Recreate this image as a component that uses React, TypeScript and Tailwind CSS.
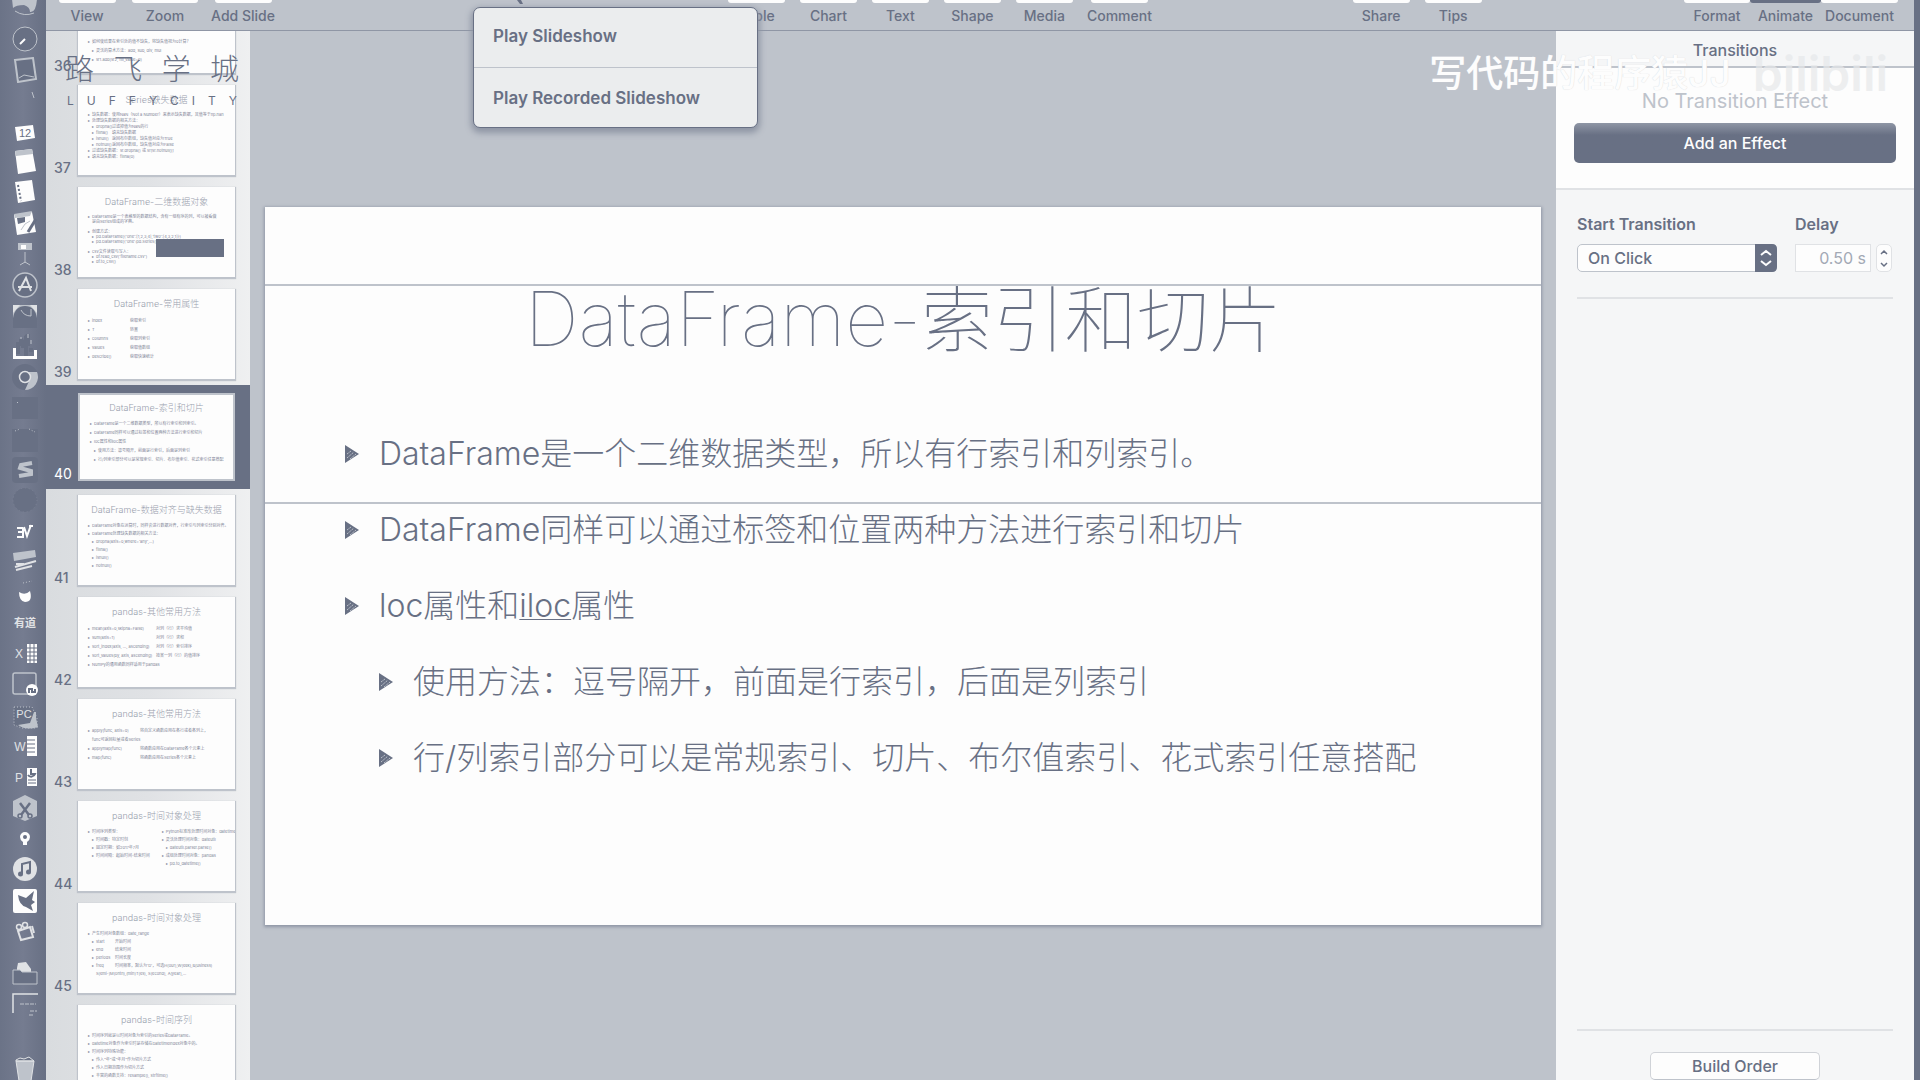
import React from "react";

type Line = { t: string; c?: string; lv?: number; plain?: boolean };
type Thumb = {
  n: number;
  title: string;
  lines: Line[];
  right?: Line[];
  leading: string;
  col?: string;
  box?: boolean;
  selected?: boolean;
};

const thumbs: Thumb[] = [
  {
    n: 36,
    title: "Series数据对齐",
    leading: "leading-[9px]",
    lines: [
      { t: "pandas在进行两个对象的运算时，会按索引进行对齐" },
      { t: "然后计算。如果索引不同，则结果为并集" },
      { t: "" },
      { t: "如何使结果在索引处的值不缺失，将缺失值视为0计算？" },
      { t: "灵活的算术方法：add, sub, div, mul", lv: 1 },
      { t: "sr1.add(sr2, fill_value=0)", lv: 1 },
    ],
  },
  {
    n: 37,
    title: "Series缺失数据",
    leading: "leading-[6px]",
    col: "w-[16px]",
    lines: [
      { t: "缺失数据：使用NaN（Not a Number）来表示缺失数据，其值等于np.nan" },
      { t: "处理缺失数据的相关方法：" },
      { t: "dropna()", c: "过滤掉值为NaN的行", lv: 1 },
      { t: "fillna()", c: "填充缺失数据", lv: 1 },
      { t: "isnull()", c: "返回布尔数组，缺失值对应为True", lv: 1 },
      { t: "notnull()", c: "返回布尔数组，缺失值对应为False", lv: 1 },
      { t: "过滤缺失数据：sr.dropna() 或 sr[sr.notnull()]" },
      { t: "填充缺失数据：fillna(0)" },
    ],
  },
  {
    n: 38,
    title: "DataFrame-二维数据对象",
    leading: "leading-[5px]",
    box: true,
    lines: [
      { t: "DataFrame是一个表格型的数据结构，含有一组有序的列，可以被看做" },
      { t: "是由Series组成的字典。", plain: true },
      { t: "" },
      { t: "创建方式：" },
      { t: "pd.DataFrame({'one':[1,2,3,4],'two':[4,3,2,1]})", lv: 1 },
      { t: "pd.DataFrame({'one':pd.Series([1,2,3],index=['a','b','c']), …})", lv: 1 },
      { t: "" },
      { t: "csv文件读取与写入：" },
      { t: "df.read_csv('filename.csv')", lv: 1 },
      { t: "df.to_csv()", lv: 1 },
    ],
  },
  {
    n: 39,
    title: "DataFrame-常用属性",
    leading: "leading-[9px]",
    col: "w-[38px]",
    lines: [
      { t: "index", c: "获取索引" },
      { t: "T", c: "转置" },
      { t: "columns", c: "获取列索引" },
      { t: "values", c: "获取值数组" },
      { t: "describe()", c: "获取快速统计" },
    ],
  },
  {
    n: 40,
    title: "DataFrame-索引和切片",
    leading: "leading-[9px]",
    selected: true,
    lines: [
      { t: "DataFrame是一个二维数据类型，所以有行索引和列索引。" },
      { t: "DataFrame同样可以通过标签和位置两种方法进行索引和切片" },
      { t: "loc属性和iloc属性" },
      { t: "使用方法：逗号隔开，前面是行索引，后面是列索引", lv: 1 },
      { t: "行/列索引部分可以是常规索引、切片、布尔值索引、花式索引任意搭配", lv: 1 },
    ],
  },
  {
    n: 41,
    title: "DataFrame-数据对齐与缺失数据",
    leading: "leading-[8px]",
    lines: [
      { t: "DataFrame对象在运算时，同样会进行数据对齐，行索引与列索引分别对齐。" },
      { t: "DataFrame处理缺失数据的相关方法：" },
      { t: "dropna(axis=0,where='any',…)", lv: 1 },
      { t: "fillna()", lv: 1 },
      { t: "isnull()", lv: 1 },
      { t: "notnull()", lv: 1 },
    ],
  },
  {
    n: 42,
    title: "pandas-其他常用方法",
    leading: "leading-[9px]",
    col: "w-[64px]",
    lines: [
      { t: "mean(axis=0,skipna=False)", c: "对列（行）求平均值" },
      { t: "sum(axis=1)", c: "对列（行）求和" },
      { t: "sort_index(axis, …, ascending)", c: "对列（行）索引排序" },
      { t: "sort_values(by, axis, ascending)", c: "按某一列（行）的值排序" },
      { t: "NumPy的通用函数同样适用于pandas" },
    ],
  },
  {
    n: 43,
    title: "pandas-其他常用方法",
    leading: "leading-[9px]",
    col: "w-[48px]",
    lines: [
      { t: "apply(func, axis=0)", c: "将自定义函数应用在各行或者各列上，" },
      { t: "func可返回标量或者Series", plain: true },
      { t: "applymap(func)", c: "将函数应用在DataFrame各个元素上" },
      { t: "map(func)", c: "将函数应用在Series各个元素上" },
    ],
  },
  {
    n: 44,
    title: "pandas-时间对象处理",
    leading: "leading-[8px]",
    lines: [
      { t: "时间序列类型：" },
      { t: "时间戳：特定时刻", lv: 1 },
      { t: "固定时期：如2017年7月", lv: 1 },
      { t: "时间间隔：起始时间-结束时间", lv: 1 },
    ],
    right: [
      { t: "Python标准库处理时间对象：datetime" },
      { t: "灵活处理时间对象：dateutil" },
      { t: "dateutil.parser.parse()", lv: 1 },
      { t: "成组处理时间对象：pandas" },
      { t: "pd.to_datetime()", lv: 1 },
    ],
  },
  {
    n: 45,
    title: "pandas-时间对象处理",
    leading: "leading-[8px]",
    col: "w-[19px]",
    lines: [
      { t: "产生时间对象数组：date_range" },
      { t: "start", c: "开始时间", lv: 1 },
      { t: "end", c: "结束时间", lv: 1 },
      { t: "periods", c: "时间长度", lv: 1 },
      { t: "freq", c: "时间频率，默认为'D'，可选H(our),W(eek),B(usiness)", lv: 1 },
      { t: "S(emi-)M(onth),(min)T(es), S(econd), A(year),…", lv: 1, plain: true },
    ],
  },
  {
    n: 46,
    title: "pandas-时间序列",
    leading: "leading-[8px]",
    lines: [
      { t: "时间序列就是以时间对象为索引的Series或DataFrame。" },
      { t: "datetime对象作为索引时是存储在DatetimeIndex对象中的。" },
      { t: "时间序列特殊功能：" },
      { t: "传入“年”或“年月”作为切片方式", lv: 1 },
      { t: "传入日期范围作为切片方式", lv: 1 },
      { t: "丰富的函数支持：resample(), strftime()", lv: 1 },
    ],
  },
];

function ThumbLines({ lines, leading, col }: { lines: Line[]; leading: string; col?: string }) {
  return (
    <div className={`text-[4px] text-[#7d8496] whitespace-nowrap ${leading}`}>
      {lines.map((l, i) => (
        <div key={i} className={`flex ${leading} ${l.lv ? "pl-1" : ""}`}>
          <span className="w-1 shrink-0">{l.t && !l.plain ? "▸" : "\u00a0"}</span>
          <span className={l.c && col ? col : ""}>{l.t}</span>
          {l.c && <span>{l.c}</span>}
        </div>
      ))}
    </div>
  );
}

function SlideThumb({ s }: { s: Thumb }) {
  return (
    <li className={`flex items-end pl-2 pr-[15px] ${s.selected ? "h-[104px] bg-[#687084] py-2" : "h-[102px] py-1.5"}`}>
      <span className={`w-[24px] text-[14px] leading-[14px] ${s.selected ? "text-white" : "text-[#687084] font-medium"}`}>{s.n}</span>
      <button
        aria-label={`Slide ${s.n}`}
        className={`relative flex h-full flex-1 flex-col overflow-hidden bg-[#fdfdfd] text-left ${
          s.selected ? "border-2 border-[#bec3cb]" : "shadow-[0_1px_1px_1px_#bec3cb]"
        }`}
      >
        <span className={`w-full shrink-0 text-center text-[9px] font-light leading-[11px] text-[#9aa1ae] whitespace-nowrap ${s.selected ? "pt-[7px] pb-1.5" : "pt-[9px] pb-[7px]"}`}>
          {s.title}
        </span>
        <span className="flex w-full gap-[12px] pl-2.5">
          <ThumbLines lines={s.lines} leading={s.leading} col={s.col} />
          {s.right && <ThumbLines lines={s.right} leading={s.leading} />}
        </span>
        {s.box && <span className="absolute right-[11px] top-[52px] h-[18px] w-[68px] bg-[#687084]" />}
      </button>
    </li>
  );
}

const M = "#bec3cb";
const W = "#fdfdfd";
const D = "#687084";
const L = "#e0e2e5";

const dock: { name: string; h: string; art: React.ReactNode }[] = [
  { name: "Finder", h: "h-6", art: <><path d="M0 0H25Q24 14 18 13Q18 8 12 6Q4 6 1 9Z" fill={M} /><path d="M3 12Q12 18 22 14" stroke={M} fill="none" /></> },
  { name: "Safari", h: "h-[30px]", art: <><circle cx="13" cy="13" r="12" fill={D} stroke={M} /><path d="M8 18L13 13" stroke={W} strokeWidth="2" /></> },
  { name: "Mail", h: "h-8", art: <><path d="M3 3L21 1L24 22L6 25Z" fill={D} stroke={M} strokeWidth="2" /><path d="M7 21L12 18L22 20" stroke={M} fill="none" /></> },
  { name: "Launchpad", h: "h-8", art: <path d="M20 3L22 9" stroke={M} strokeWidth="1" /> },
  { name: "Calendar", h: "h-[30px]", art: <><path d="M3 7L21 5L23 18L5 21Z" fill={W} /><text x="13" y="17" fontSize="11" fill={D} textAnchor="middle" fontFamily="Liberation Sans">12</text></> },
  { name: "Notes", h: "h-7", art: <><path d="M3 2L20 0L24 22L6 25Z" fill={W} /><path d="M3 2L20 0L21 5L4 7Z" fill={M} /></> },
  { name: "Contacts", h: "h-[30px]", art: <><path d="M3 4L20 2L23 22L6 25Z" fill={W} /><path d="M6 7L9 23" stroke={D} strokeWidth="2" strokeDasharray="2 2" /></> },
  { name: "Pages", h: "h-[34px]", art: <><path d="M2 5L20 2L24 22L5 25Z" fill={W} /><path d="M2 4L20 1L18 6L3 8Z" fill={M} /><path d="M5 8L13 7L13 12L6 14Z" fill={D} /><path d="M24 9L16 22" stroke={D} strokeWidth="3" /><path d="M9 20L13 14L18 11" stroke={M} fill="none" /></> },
  { name: "Keynote", h: "h-7", art: <><rect x="6" y="2" width="14" height="7" fill={M} /><rect x="9" y="4" width="5" height="4" fill={W} /><path d="M13 11V22M8 24L13 21L18 24" stroke={M} fill="none" /></> },
  { name: "App Store", h: "h-[34px]", art: <><circle cx="13" cy="13" r="12" fill={D} stroke={M} strokeWidth="1.5" /><path d="M7 19L14 6L19 19M6 15H20" stroke={L} strokeWidth="2" fill="none" /></> },
  { name: "Preview", h: "h-[30px]", art: <><path d="M1 1H25V24H1Z" fill={M} /><path d="M1 1H8L1 9ZM18 1H25V9Z" fill={L} /><path d="M1 24V14Q3 2 13 2Q23 2 25 14V24Z" fill={D} /><path d="M9 6Q12 12 19 12V5" stroke={M} fill="none" /></> },
  { name: "Numbers", h: "h-[30px]", art: <><path d="M1 14H4V22H25V25H1ZM22 16H25V22H22Z" fill={W} /><path d="M6 20V10H9V5L11 9V14M14 22V3L16 1V12M19 14V18" stroke={D} strokeWidth="4" fill="none" /><path d="M8 4H10M16 0V4M19 6V10" stroke={M} fill="none" /></> },
  { name: "Chrome", h: "h-[30px]", art: <><circle cx="13" cy="13" r="13" fill={D} /><path d="M13 8H25A13 13 0 0 1 13 26L18 15Z" fill={M} /><circle cx="13" cy="13" r="5.5" fill={D} stroke={L} strokeWidth="1.5" /></> },
  { name: "Terminal", h: "h-8", art: <><rect y="2" width="26" height="22" fill={D} /><rect x="5" y="7" width="1" height="1" fill={M} /></> },
  { name: "PyCharm", h: "h-8", art: <><path d="M0 2H26V25H0Z" fill={D} /><path d="M3 4L8 2M17 2L23 5" stroke={M} strokeDasharray="1 2" /></> },
  { name: "Sublime Text", h: "h-7", art: <><rect width="26" height="26" rx="4" fill={D} /><path d="M20 6L9 8L8 11L19 14V17L7 19" stroke={M} strokeWidth="4" fill="none" /></> },
  { name: "QuickTime", h: "h-8", art: <circle cx="13" cy="13" r="12" fill={D} stroke="#7d8496" strokeDasharray="1 3" /> },
  { name: "EV", h: "h-[30px]", art: <path d="M5 10H11M6 14H11M5 19H11V10M12 9L15 18L19 7M17 8H21" stroke={W} strokeWidth="2" fill="none" /> },
  { name: "Final Cut", h: "h-8", art: <><path d="M1 4L23 1L24 8L2 12Z" fill={M} /><path d="M3 18L24 12M4 21L20 17M4 15H12" stroke={L} strokeWidth="2" /></> },
  { name: "QQ", h: "h-[30px]", art: <><path d="M7 12Q13 16 18 11Q21 22 13 22Q7 21 7 12Z" fill={W} /><path d="M11 3L20 1" stroke={M} strokeDasharray="1 2" /></> },
  { name: "Youdao", h: "h-[30px]", art: <text x="13" y="17" fontSize="11" fontWeight="700" fill={L} textAnchor="middle" fontFamily="Noto Sans CJK SC">有道</text> },
  { name: "Excel", h: "h-[30px]", art: <><text x="7" y="18" fontSize="12" fill={L} textAnchor="middle" fontFamily="Liberation Sans">X</text><path d="M15 4H25V23H15Z" fill={W} /><path d="M15 8H25M15 12H25M15 16H25M15 20H25M18 4V23M22 4V23" stroke={D} /></> },
  { name: "Remote Desktop", h: "h-[34px]", art: <><rect x="1" y="1" width="23" height="21" rx="2" fill="none" stroke={M} strokeWidth="1.5" /><circle cx="20" cy="18" r="6" fill={W} /><path d="M17 21V17H20V20H23V17" stroke={D} strokeWidth="2" fill="none" /></> },
  { name: "PyCharm Editor", h: "h-7", art: <><path d="M2 4H20L25 15V25H10L2 22Z" fill={D} stroke={M} strokeDasharray="1 2" /><path d="M22 9H24V15L26 24Q14 28 6 22L18 20Z" fill={M} /><text x="12" y="15" fontSize="11" fill={L} textAnchor="middle" fontFamily="Liberation Sans">PC</text></> },
  { name: "Word", h: "h-8", art: <><text x="8" y="18" fontSize="12" fill={L} textAnchor="middle" fontFamily="Liberation Sans">W</text><path d="M15 3H25V23H15Z" fill={W} /><path d="M15 7H23M15 11H23M15 15H23M15 19H23" stroke={D} /></> },
  { name: "PowerPoint", h: "h-[30px]", art: <><text x="7" y="18" fontSize="12" fill={L} textAnchor="middle" fontFamily="Liberation Sans">P</text><path d="M15 4H25V22H15Z" fill={W} /><path d="M19 5V10H23A4 4 0 0 1 16 11" stroke={D} strokeWidth="2" fill="none" /><path d="M16 16H24M16 19H24" stroke={D} /></> },
  { name: "Scissors", h: "h-8", art: <><path d="M1 6L13 0L25 6V21L13 26L1 21Z" fill={M} /><path d="M8 8L17 20M18 8L9 20" stroke={D} strokeWidth="2.5" /><circle cx="8" cy="21" r="2" fill="none" stroke={D} strokeWidth="1.5" /><circle cx="18" cy="21" r="2" fill="none" stroke={D} strokeWidth="1.5" /></> },
  { name: "Maps", h: "h-[30px]", art: <><path d="M13 6A5 5 0 0 1 18 11Q18 14 15 16V19H11V16Q8 14 8 11A5 5 0 0 1 13 6Z" fill={W} /><circle cx="13" cy="11" r="2" fill={D} /></> },
  { name: "Music", h: "h-[30px]", art: <><circle cx="13" cy="13" r="12" fill={L} /><path d="M10 18V8L18 6V16" stroke={D} strokeWidth="2" fill="none" /><circle cx="8.500" cy="18" r="2.500" fill={D} /><circle cx="16.500" cy="16" r="2.500" fill={D} /></> },
  { name: "Thunder", h: "h-[34px]", art: <><rect x="1" y="1" width="24" height="24" rx="2" fill={W} /><path d="M6 7L14 10L22 3L20 12L23 14L19 17L21 23L14 19Q7 17 6 7Z" fill={D} /></> },
  { name: "Camera", h: "h-7", art: <><path d="M6 12L18 8L21 18L9 21Z" fill="none" stroke={L} strokeWidth="2" /><circle cx="7" cy="8" r="2.500" fill="none" stroke={L} strokeWidth="1.5" /><circle cx="13" cy="6" r="2.500" fill="none" stroke={L} strokeWidth="1.5" /><path d="M20 7L22 14" stroke={L} strokeWidth="2" /></> },
  { name: "Documents", h: "h-[46px] pt-2", art: <><path d="M5 8L6 3L14 2L19 9V12H5Z" fill={L} /><path d="M1 10H8L10 12H25V24H1Z" fill={D} stroke={M} /></> },
  { name: "Desktop", h: "h-7", art: <><path d="M1 20V1H26" stroke={L} strokeWidth="1.5" fill="none" /><path d="M8 11H24M18 18H25M17 22H22" stroke={M} strokeDasharray="4 1" /></> },
  { name: "Trash", h: "h-[60px] pt-9", art: <><path d="M4 6H22L19 26H7Z" fill={M} /><path d="M4 5L8 3L12 4L17 2L22 6H4Z" fill={D} stroke={L} /><path d="M4 6H22L19 26M7 26L4 6" stroke={L} fill="none" /></> },
];

function ToolButton({ label, w = "w-[72px]", bar = "w-[57px] bg-[#fdfdfd]" }: { label: string; w?: string; bar?: string }) {
  return (
    <button className={`flex h-[30px] flex-col items-center text-[14px] font-medium leading-[26px] text-[#687084] ${w}`}>
      <span className={`h-[3px] shrink-0 rounded-b-sm ${bar}`} />
      <span className="h-[26px]">{label}</span>
    </button>
  );
}

function Bullet() {
  return (
    <svg width="14" height="18" viewBox="0 0 14 18" className="shrink-0" aria-hidden="true">
      <path d="M0 0L14 9L0 18Z" fill={D} />
      <path d="M2 13L9 7M5 14L11 9M2 9L6 6" stroke={M} strokeWidth="1" strokeDasharray="2 1" />
    </svg>
  );
}

const bullets: { body: React.ReactNode; sub?: boolean }[] = [
  { body: "DataFrame是一个二维数据类型，所以有行索引和列索引。" },
  { body: "DataFrame同样可以通过标签和位置两种方法进行索引和切片" },
  { body: <>loc属性和<span className="underline decoration-1 underline-offset-2">iloc</span>属性</> },
  { body: "使用方法：逗号隔开，前面是行索引，后面是列索引", sub: true },
  { body: "行/列索引部分可以是常规索引、切片、布尔值索引、花式索引任意搭配", sub: true },
];

export default function App() {
  return (
    <div className="relative flex h-screen w-full overflow-hidden bg-[#bec3cb] font-['Inter','Noto_Sans_CJK_SC',sans-serif] text-[#687084]">
      <nav aria-label="Dock" className="flex w-[46px] shrink-0 flex-col items-center bg-linear-to-r from-[#6b7387] via-[#757c90] to-[#687084] pl-1">
        {dock.map((d) => (
          <button key={d.name} aria-label={d.name} className={`flex shrink-0 items-center justify-center ${d.h}`}>
            <svg width="26" height="26" viewBox="0 0 26 26">{d.art}</svg>
          </button>
        ))}
      </nav>

      <div className="flex min-w-0 flex-1 flex-col border-r-[6px] border-[#687084]">
        <header className="flex h-[31px] shrink-0 border-b border-[#8f96a5] pl-0.5 pr-4">
          <ToolButton label="View" w="w-[78px]" />
          <ToolButton label="Zoom" w="w-[78px]" bar="w-[66px] bg-[#fdfdfd]" />
          <ToolButton label="Add Slide" w="w-[78px]" />
          <span className="flex-[54]" />
          <ToolButton label="Table" />
          <ToolButton label="Chart" />
          <ToolButton label="Text" />
          <ToolButton label="Shape" />
          <ToolButton label="Media" />
          <ToolButton label="Comment" w="w-[78px]" />
          <span className="flex-[23]" />
          <ToolButton label="Share" />
          <ToolButton label="Tips" />
          <span className="flex-[24]" />
          <ToolButton label="Format" w="w-[66px]" bar="w-full bg-[#fdfdfd]" />
          <ToolButton label="Animate" w="w-[71px]" bar="w-full bg-[#687084]" />
          <ToolButton label="Document" w="w-[77px]" bar="w-full bg-[#fdfdfd]" />
        </header>

        <div className="flex min-h-0 flex-1">
          <aside className="w-[204px] shrink-0 overflow-hidden bg-linear-to-r from-[#d9dcdf] via-[#e0e2e5] to-[#eff0f1]">
            <ol className="-mt-[54px]">
              {thumbs.map((s) => (
                <SlideThumb key={s.n} s={s} />
              ))}
            </ol>
          </aside>

          <main className="min-w-0 flex-1 px-[15px] pt-[176px]">
            <article className="relative aspect-video w-full bg-[#fdfdfd] shadow-[0_1px_3px_1px_#8f96a5]">
              <div className="absolute inset-x-0 top-[77px] h-0.5 bg-[#bec3cb]" />
              <div className="absolute inset-x-0 top-[295px] h-0.5 bg-[#bec3cb]" />
              <h1 className="pt-[64px] text-center text-[72px] font-thin leading-[96px] whitespace-nowrap">
                <span className="text-[75px]">DataFrame-</span>索引和切片
              </h1>
              <ul className="pt-[48px] pl-[80px] text-[32px] font-light whitespace-nowrap">
                {bullets.map((b, i) => (
                  <li key={i} className={`flex h-[76px] items-center gap-5 ${b.sub ? "pl-[34px]" : ""}`}>
                    <Bullet />
                    <span>{b.body}</span>
                  </li>
                ))}
              </ul>
            </article>
          </main>

          <aside className="flex w-[358px] shrink-0 flex-col bg-[#f5f6f7]">
            <h2 className="h-[37px] border-b-2 border-[#bec3cb] text-center text-[16px] font-medium leading-[38px]">Transitions</h2>
            <section className="flex h-[122px] flex-col items-stretch border-b-2 border-[#e0e2e5] bg-[#fdfdfd] px-[18px] pt-[15px]">
              <p className="text-center text-[20px] leading-9 text-[#bec3cb]">No Transition Effect</p>
              <button className="mt-1 h-10 rounded-[5px] bg-linear-to-b from-[#8f96a5] via-[#687084] via-30% to-[#687084] text-[16px] font-medium text-[#fdfdfd]">Add an Effect</button>
            </section>
            <section className="mx-[21px] flex gap-[18px] border-b-2 border-[#e0e2e5] pt-5 pb-[25px] text-[16px]">
              <div className="w-[200px]">
                <label htmlFor="start" className="block h-[34px] font-semibold leading-7">Start Transition</label>
                <div className="relative">
                  <select id="start" className="h-7 w-full appearance-none rounded-[5px] border border-[#bec3cb] bg-[#fdfdfd] pl-2.5 font-medium">
                    <option>On Click</option>
                  </select>
                  <svg className="pointer-events-none absolute right-0 top-0" width="22" height="28" viewBox="0 0 22 28" aria-hidden="true">
                    <path d="M0 0H17Q22 0 22 5V23Q22 28 17 28H0Z" fill={D} />
                    <path d="M6 11L11 7L16 11M6 17L11 21L16 17" stroke={W} strokeWidth="2" fill="none" />
                  </svg>
                </div>
              </div>
              <div className="flex-1">
                <label htmlFor="delay" className="block h-[34px] font-semibold leading-7">Delay</label>
                <div className="flex gap-[5px]">
                  <input id="delay" defaultValue="0.50 s" className="h-7 w-[76px] border border-[#e0e2e5] bg-[#fdfdfd] pr-1 text-right text-[#a3a9b5]" />
                  <button aria-label="Change delay" className="h-7 w-4 rounded-[5px] border border-[#e0e2e5] bg-[#fdfdfd]">
                    <svg width="14" height="26" viewBox="0 0 14 26" aria-hidden="true">
                      <path d="M4 9L7 6L10 9M4 18L7 21L10 18" stroke={D} strokeWidth="1.5" fill="none" />
                    </svg>
                  </button>
                </div>
              </div>
            </section>
            <footer className="mx-[21px] mt-auto border-t-2 border-[#e0e2e5] pt-[21px] text-center">
              <button className="h-7 w-[170px] rounded-[5px] border border-[#d0d3d8] border-b-[#bec3cb] bg-[#fdfdfd] text-[16px] font-medium">Build Order</button>
            </footer>
          </aside>
        </div>
      </div>

      <div role="menu" className="absolute left-[473px] top-[7px] w-[285px] rounded-[7px] border border-[#687084] bg-[#ebedee] text-[17px] font-semibold shadow-[0_3px_6px_2px_#8f96a5]">
        <button role="menuitem" className="block h-[60px] w-full border-b border-[#bec3cb] pl-[19px] pb-0.5 text-left">Play Slideshow</button>
        <button role="menuitem" className="block h-[59px] w-full pl-[19px] pt-0.5 text-left">Play Recorded Slideshow</button>
      </div>
      <svg className="absolute left-[514px] top-0" width="12" height="5" viewBox="0 0 12 5" aria-hidden="true">
        <path d="M3 0L6 4H9L7 0Z" fill={D} />
      </svg>

      <div className="pointer-events-none absolute left-[65px] top-[51px] w-[174px]">
        <div className="flex justify-between text-[29px] font-light leading-[38px]">
          {["路", "飞", "学", "城"].map((c) => <span key={c}>{c}</span>)}
        </div>
        <div className="flex justify-between px-0.5 text-[12px] leading-[24px]">
          {Array.from("LUFFYCITY").map((c, i) => <span key={i}>{c}</span>)}
        </div>
      </div>

      <div className="pointer-events-none absolute right-[32px] top-[38px] flex items-center gap-[22px] whitespace-nowrap text-[#fdfdfd]">
        <span className="text-[37px] font-medium leading-[72px] [text-shadow:0_0_1px_#d0d3d8]">写代码的程序猿JJ</span>
        <span className="text-[48px] font-semibold leading-[56px] text-[#e6e8ea]/70">bilibili</span>
      </div>
    </div>
  );
}
